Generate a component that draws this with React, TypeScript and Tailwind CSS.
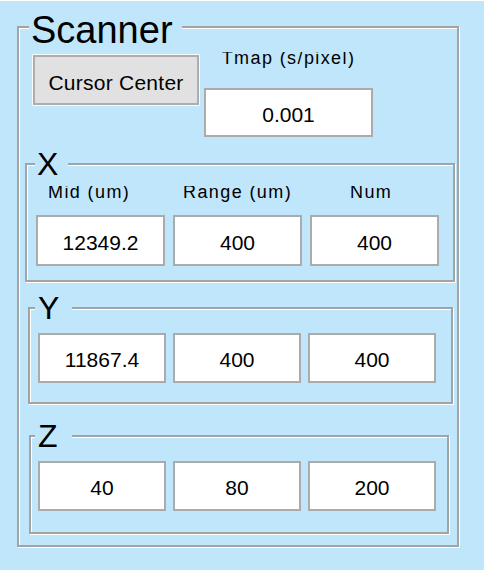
import { FC, ReactNode } from "react";

// etched group box: 2px grey line with a white line inside top/left and outside right/bottom
const etched =
  "border-2 border-[#a3a3a3] shadow-[inset_1px_1px_0_#ffffff,1px_1px_0_#ffffff]";

interface GroupProps {
  title: string;
  className: string;
  legendClass: string;
  children: ReactNode;
}

const Group: FC<GroupProps> = ({ title, className, legendClass, children }) => (
  <fieldset className={`${etched} ${className}`}>
    <legend className={`bg-[#c0e6fb] text-[32px] leading-[24px] ${legendClass}`}>{title}</legend>
    {children}
  </fieldset>
);

const Box: FC<{ value: string; className: string }> = ({ value, className }) => (
  <div
    className={`flex items-center justify-center bg-white border-2 border-[#ababab] pt-[3px] text-[21px] leading-none ${className}`}
  >
    {value}
  </div>
);

// the form labels have the top of their capitals clipped
const Label: FC<{ text: string; className?: string }> = ({ text, className }) => (
  <div className={`h-[19px] overflow-hidden ${className ?? ""}`}>
    <div className="-mt-[4px] text-[18px] leading-[20px] tracking-[1.4px] whitespace-nowrap">
      {text}
    </div>
  </div>
);

const App: FC = () => {
  return (
    <div className="w-[484px] h-[570px] bg-[#c0e6fb] border-t border-white pt-[8px] pl-[17px] text-black font-['Liberation_Sans',Arial,sans-serif]">
      <fieldset className={`${etched} w-[441px] pl-[6px] pr-[2px] pb-[11px]`}>
        <legend className="bg-[#c0e6fb] ml-[4px] pl-[2px] pr-[9px] pt-[6px] text-[38px] leading-[30px]">
          Scanner
        </legend>

        <div className="flex items-start">
          <button className="ml-[8px] mt-[10px] w-[166px] h-[50px] flex items-center justify-center pt-[5px] bg-[#e1e1e1] border-2 border-[#adadad] shadow-[0_0_0_1px_#f4fafd] text-[21px] leading-none tracking-[0.25px]">
            Cursor Center
          </button>
          <div className="ml-[5px] flex flex-col items-center">
            <Label text="Tmap (s/pixel)" className="mt-[7px]" />
            <Box value="0.001" className="mt-[17px] w-[169px] h-[49px]" />
          </div>
        </div>

        <Group
          title="X"
          className="mt-[15px] w-[430px] pl-[9px] pb-[14px]"
          legendClass="-ml-[1px] pl-[2px] pr-[10px]"
        >
          <div className="mt-[10px] flex gap-[8px]">
            <Label text="Mid (um)" className="w-[129px] pl-[12px]" />
            <Label text="Range (um)" className="w-[129px] pl-[10px]" />
            <Label text="Num" className="w-[129px] pl-[40px]" />
          </div>
          <div className="mt-[10px] flex gap-[8px]">
            <Box value="12349.2" className="w-[129px] h-[51px]" />
            <Box value="400" className="w-[129px] h-[51px]" />
            <Box value="400" className="w-[129px] h-[51px]" />
          </div>
        </Group>

        <Group
          title="Y"
          className="mt-[14px] ml-[3px] w-[425px] pl-[8px] pb-[19px]"
          legendClass="-ml-[3px] pl-[3px] pr-[13px]"
        >
          <div className="mt-[13px] flex gap-[7px]">
            <Box value="11867.4" className="w-[128px] h-[50px]" />
            <Box value="400" className="w-[128px] h-[50px]" />
            <Box value="400" className="w-[128px] h-[50px]" />
          </div>
        </Group>

        <Group
          title="Z"
          className="mt-[20px] ml-[4px] w-[420px] pl-[7px] pb-[21px]"
          legendClass="-ml-[3px] pl-[3px] pr-[14px]"
        >
          <div className="mt-[13px] flex gap-[7px]">
            <Box value="40" className="w-[128px] h-[50px]" />
            <Box value="80" className="w-[128px] h-[50px]" />
            <Box value="200" className="w-[128px] h-[50px]" />
          </div>
        </Group>
      </fieldset>
    </div>
  );
};

export default App;
